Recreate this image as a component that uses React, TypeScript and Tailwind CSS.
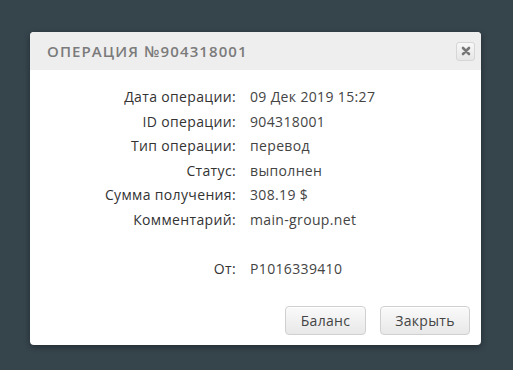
import React from "react";

const rows: [string, string][] = [
  ["Дата операции:", "09 Дек 2019 15:27"],
  ["ID операции:", "904318001"],
  ["Тип операции:", "перевод"],
  ["Статус:", "выполнен"],
  ["Сумма получения:", "308.19 $"],
  ["Комментарий:", "main-group.net"],
];

const Btn = ({ children, w }: { children: React.ReactNode; w: string }) => (
  <button
    className={`${w} h-[29px] rounded-[4px] border border-[#d0d0d0] bg-gradient-to-b from-[#fafafa] to-[#e8e8e8] text-[14px] tracking-[0.3px] text-[#444] shadow-[inset_0_1px_0_#fff]`}
  >
    {children}
  </button>
);

export default function App() {
  return (
    <div
      className="relative w-[513px] h-[370px] overflow-hidden bg-[#36444c] pt-[32px] pl-[30px]"
      style={{ fontFamily: '"Open Sans", "Noto Sans", sans-serif' }}
    >
      <div className="w-[451px] h-[313px] rounded-[4px] bg-white overflow-hidden flex flex-col shadow-[0_2px_6px_rgba(0,0,0,0.35)]">
        {/* header */}
        <div className="h-[38px] bg-[#eeeeee] flex items-center justify-between pl-[17px] pr-[6px]">
          <span className="text-[15px] font-semibold tracking-[1.1px] text-[#7b7b7b]">
            ОПЕРАЦИЯ №904318001
          </span>
          <button className="w-[19px] h-[19px] rounded-[3px] border border-[#d6d6d6] bg-gradient-to-b from-[#f8f8f8] to-[#e6e6e6] flex items-center justify-center">
            <svg width="10" height="10" viewBox="0 0 10 10">
              <path d="M2 2 L8 8 M8 2 L2 8" stroke="#777" strokeWidth="2.6" strokeLinecap="round" />
            </svg>
          </button>
        </div>

        {/* body */}
        <div className="pt-[15px] grid grid-cols-[206px_1fr] gap-x-[14px] text-[14px] tracking-[0.35px] leading-[24.6px] text-[#333]">
          {rows.map(([k, v]) => (
            <React.Fragment key={k}>
              <div className="text-right">{k}</div>
              <div className="text-[#444]">{v}</div>
            </React.Fragment>
          ))}
          <div className="h-[24.6px] col-span-2" />
          <div className="text-right">От:</div>
          <div className="text-[#444]">P1016339410</div>
        </div>

        {/* footer */}
        <div className="mt-auto mb-[10px] flex justify-end gap-[14px] pr-[11px]">
          <Btn w="w-[81px]">Баланс</Btn>
          <Btn w="w-[90px]">Закрыть</Btn>
        </div>
      </div>
    </div>
  );
}
